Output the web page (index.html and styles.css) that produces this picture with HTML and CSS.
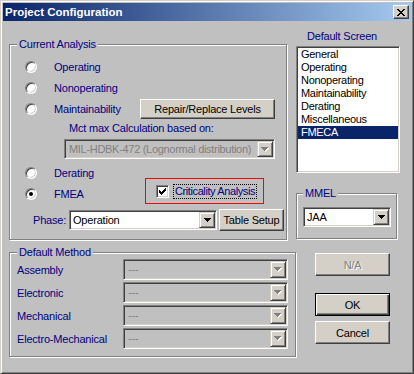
FILE: index.html
```html
<!DOCTYPE html>
<html lang="en">
<head>
    <meta charset="UTF-8">
    <title>Project Configuration</title>
    <link rel="stylesheet" href="styles.css">
</head>
<body>
    <div class="window">
        <div class="titlebar">
            <span class="title">Project Configuration</span>
            <span class="close-btn">
                <svg width="8" height="7" viewBox="0 0 8 7" shape-rendering="crispEdges"><path d="M0 0h2v1H0zM6 0h2v1H6zM1 1h2v1H1zM5 1h2v1H5zM2 2h4v1H2zM3 3h2v1H3zM2 4h4v1H2zM1 5h2v1H1zM5 5h2v1H5zM0 6h2v1H0zM6 6h2v1H6z" fill="#000"/></svg>
            </span>
        </div>

        <div class="client">
            <div class="left-col">
                <fieldset class="group analysis">
                    <legend>Current Analysis</legend>
                    <div class="row">
                        <div class="option"><span class="radio"></span><span class="opt-label">Operating</span></div>
                    </div>
                    <div class="row">
                        <div class="option"><span class="radio"></span><span class="opt-label">Nonoperating</span></div>
                    </div>
                    <div class="row">
                        <div class="option"><span class="radio"></span><span class="opt-label">Maintainability</span></div>
                        <div class="btn repair-btn">Repair/Replace Levels</div>
                    </div>
                    <div class="mct-label">Mct max Calculation based on:</div>
                    <div class="combo disabled mil-combo">
                        <span class="combo-text">MIL-HDBK-472 (Lognormal distribution)</span>
                        <span class="combo-btn">
                            <svg width="8" height="5" viewBox="0 0 8 5" shape-rendering="crispEdges"><path d="M1 1h7v1H1zM2 2h5v1H2zM3 3h3v1H3zM4 4h1v1H4z" fill="#fff"/><path d="M0 0h7v1H0zM1 1h5v1H1zM2 2h3v1H2zM3 3h1v1H3z" fill="#808080"/></svg>
                        </span>
                    </div>
                    <div class="row derating">
                        <div class="option"><span class="radio"></span><span class="opt-label">Derating</span></div>
                    </div>
                    <div class="row">
                        <div class="option"><span class="radio checked"></span><span class="opt-label">FMEA</span></div>
                        <div class="crit-box">
                            <span class="check">
                                <svg width="7" height="7" viewBox="0 0 7 7" shape-rendering="crispEdges"><path d="M6 0h1v1H6zM5 1h2v1H5zM0 2h1v1H0zM4 2h3v1H4zM0 3h2v1H0zM3 3h3v1H3zM0 4h5v1H0zM1 5h3v1H1zM2 6h1v1H2z" fill="#000"/></svg>
                            </span>
                            <span class="focus-label">Criticality Analysis</span>
                        </div>
                    </div>
                    <div class="row phase-row">
                        <span class="phase-label">Phase:</span>
                        <div class="combo phase-combo">
                            <span class="combo-text">Operation</span>
                            <span class="combo-btn">
                                <svg width="7" height="4" viewBox="0 0 7 4" shape-rendering="crispEdges"><path d="M0 0h7v1H0zM1 1h5v1H1zM2 2h3v1H2zM3 3h1v1H3z" fill="#000"/></svg>
                            </span>
                        </div>
                        <div class="btn table-btn">Table Setup</div>
                    </div>
                </fieldset>

                <fieldset class="group method">
                    <legend>Default Method</legend>
                    <div class="method-row">
                        <span class="method-label">Assembly</span>
                        <div class="combo disabled method-combo">
                            <span class="combo-text">---</span>
                            <span class="combo-btn">
                                <svg width="8" height="5" viewBox="0 0 8 5" shape-rendering="crispEdges"><path d="M1 1h7v1H1zM2 2h5v1H2zM3 3h3v1H3zM4 4h1v1H4z" fill="#fff"/><path d="M0 0h7v1H0zM1 1h5v1H1zM2 2h3v1H2zM3 3h1v1H3z" fill="#808080"/></svg>
                            </span>
                        </div>
                    </div>
                    <div class="method-row">
                        <span class="method-label">Electronic</span>
                        <div class="combo disabled method-combo">
                            <span class="combo-text">---</span>
                            <span class="combo-btn">
                                <svg width="8" height="5" viewBox="0 0 8 5" shape-rendering="crispEdges"><path d="M1 1h7v1H1zM2 2h5v1H2zM3 3h3v1H3zM4 4h1v1H4z" fill="#fff"/><path d="M0 0h7v1H0zM1 1h5v1H1zM2 2h3v1H2zM3 3h1v1H3z" fill="#808080"/></svg>
                            </span>
                        </div>
                    </div>
                    <div class="method-row">
                        <span class="method-label">Mechanical</span>
                        <div class="combo disabled method-combo">
                            <span class="combo-text">---</span>
                            <span class="combo-btn">
                                <svg width="8" height="5" viewBox="0 0 8 5" shape-rendering="crispEdges"><path d="M1 1h7v1H1zM2 2h5v1H2zM3 3h3v1H3zM4 4h1v1H4z" fill="#fff"/><path d="M0 0h7v1H0zM1 1h5v1H1zM2 2h3v1H2zM3 3h1v1H3z" fill="#808080"/></svg>
                            </span>
                        </div>
                    </div>
                    <div class="method-row">
                        <span class="method-label">Electro-Mechanical</span>
                        <div class="combo disabled method-combo">
                            <span class="combo-text">---</span>
                            <span class="combo-btn">
                                <svg width="8" height="5" viewBox="0 0 8 5" shape-rendering="crispEdges"><path d="M1 1h7v1H1zM2 2h5v1H2zM3 3h3v1H3zM4 4h1v1H4z" fill="#fff"/><path d="M0 0h7v1H0zM1 1h5v1H1zM2 2h3v1H2zM3 3h1v1H3z" fill="#808080"/></svg>
                            </span>
                        </div>
                    </div>
                </fieldset>
            </div>

            <div class="right-col">
                <div class="list-caption">Default Screen</div>
                <div class="listbox">
                    <div class="list-item">General</div>
                    <div class="list-item">Operating</div>
                    <div class="list-item">Nonoperating</div>
                    <div class="list-item">Maintainability</div>
                    <div class="list-item">Derating</div>
                    <div class="list-item">Miscellaneous</div>
                    <div class="list-item selected">FMECA</div>
                </div>

                <fieldset class="group mmel">
                    <legend>MMEL</legend>
                    <div class="combo mmel-combo">
                        <span class="combo-text">JAA</span>
                        <span class="combo-btn">
                            <svg width="7" height="4" viewBox="0 0 7 4" shape-rendering="crispEdges"><path d="M0 0h7v1H0zM1 1h5v1H1zM2 2h3v1H2zM3 3h1v1H3z" fill="#000"/></svg>
                        </span>
                    </div>
                </fieldset>

                <div class="btn dlg-btn na-btn">N/A</div>
                <div class="btn dlg-btn ok-btn">OK</div>
                <div class="btn dlg-btn cancel-btn">Cancel</div>
            </div>
        </div>
    </div>
</body>
</html>
```

FILE: styles.css
```css
body {
    margin: 0;
    font-family: "Liberation Sans", Arial, sans-serif;
    font-size: 11px;
    letter-spacing: -0.2px;
    color: #000;
}

.window {
    width: 414px;
    height: 374px;
    box-sizing: border-box;
    background: #c0c0c0;
    border: 1px solid;
    border-color: #d4d0c8 #404040 #404040 #d4d0c8;
    box-shadow: inset 1px 1px #fff, inset -1px -1px #808080;
    padding: 2px;
    display: flex;
    flex-direction: column;
}

.titlebar {
    height: 18px;
    flex: none;
    display: flex;
    align-items: center;
    padding: 0 2px;
    background: linear-gradient(to right, #0a246a, #a6caf0);
    color: #fff;
    font-weight: bold;
    font-size: 11.5px;
    letter-spacing: 0;
}

.title {
    flex: 1;
}

.close-btn {
    width: 16px;
    height: 14px;
    box-sizing: border-box;
    background: #d4d0c8;
    border: 1px solid;
    border-color: #fff #404040 #404040 #fff;
    box-shadow: inset -1px -1px #808080;
    display: flex;
    align-items: center;
    justify-content: center;
}

.client {
    flex: 1;
    display: flex;
    padding-left: 6px;
}

.left-col {
    width: 287px;
    padding-top: 17px;
    display: flex;
    flex-direction: column;
}

.right-col {
    width: 104px;
    display: flex;
    flex-direction: column;
}

/* group boxes */
.group {
    margin: 0;
    padding: 0 0 0 7px;
    min-width: 0;
    box-sizing: border-box;
    border: 1px solid #808080;
    box-shadow: inset 1px 1px #fff, 1px 1px #fff;
}

.group legend {
    padding: 0 2px;
    line-height: 13px;
    color: #000080;
    background: #c0c0c0;
}

.analysis {
    width: 278px;
    padding-top: 5px;
    padding-bottom: 8px;
}

.row {
    display: flex;
    align-items: center;
    height: 21px;
}

.option {
    display: flex;
    align-items: center;
    width: 115px;
    margin-left: 8px;
    flex: none;
}

.radio {
    width: 12px;
    height: 12px;
    box-sizing: border-box;
    flex: none;
    border-radius: 50%;
    background: #fff;
    border: 1px solid;
    border-color: #808080 #fff #fff #808080;
    box-shadow: inset 1px 1px #404040, inset -1px -1px #d4d0c8;
    margin-right: 17px;
    display: flex;
    align-items: center;
    justify-content: center;
}

.radio.checked::after {
    content: "";
    width: 4px;
    height: 4px;
    border-radius: 50%;
    background: #000;
}

.opt-label {
    color: #000080;
    white-space: nowrap;
}

.btn {
    box-sizing: border-box;
    background: #d4d0c8;
    border: 1px solid;
    border-color: #fff #404040 #404040 #fff;
    box-shadow: inset -1px -1px #808080;
    display: flex;
    align-items: center;
    justify-content: center;
    color: #000;
    white-space: nowrap;
}

.repair-btn {
    width: 135px;
    height: 20px;
}

.mct-label {
    height: 18px;
    line-height: 18px;
    padding-left: 52px;
    color: #000080;
}

/* combo boxes */
.combo {
    display: flex;
    box-sizing: border-box;
    height: 20px;
    padding: 1px;
    background: #fff;
    border: 1px solid;
    border-color: #808080 #fff #fff #808080;
    box-shadow: inset 1px 1px #404040, inset -1px -1px #d4d0c8;
}

.combo-text {
    flex: 1;
    padding-left: 2px;
    line-height: 16px;
    white-space: nowrap;
    overflow: hidden;
}

.combo-btn {
    width: 16px;
    flex: none;
    box-sizing: border-box;
    background: #d4d0c8;
    border: 1px solid;
    border-color: #d4d0c8 #404040 #404040 #d4d0c8;
    box-shadow: inset 1px 1px #fff, inset -1px -1px #808080;
    display: flex;
    align-items: center;
    justify-content: center;
}

.combo.disabled {
    background: #c0c0c0;
    color: #808080;
}

.mil-combo {
    width: 211px;
    margin: 2px 0 0 47px;
}

.mil-combo .combo-text {
    padding-left: 3px;
    letter-spacing: -0.3px;
}

.derating {
    margin-top: 3px;
}

.crit-box {
    width: 119px;
    height: 26px;
    margin: -5px 0 0 5px;
    box-sizing: border-box;
    border: 1px solid #ff0000;
    padding-left: 10px;
    display: flex;
    align-items: center;
}

.check {
    width: 13px;
    height: 13px;
    box-sizing: border-box;
    flex: none;
    background: #fff;
    border: 1px solid;
    border-color: #808080 #fff #fff #808080;
    box-shadow: inset 1px 1px #404040, inset -1px -1px #d4d0c8;
    display: flex;
    align-items: center;
    justify-content: center;
}

.focus-label {
    margin-left: 4px;
    padding: 0 1px;
    line-height: 13px;
    border: 1px dotted #000;
    color: #000080;
    white-space: nowrap;
    letter-spacing: -0.4px;
}

.phase-row {
    height: 22px;
    margin-top: 5px;
}

.phase-label {
    margin-left: 16px;
    width: 36px;
    color: #000080;
}

.phase-combo {
    width: 148px;
}

.table-btn {
    width: 65px;
    height: 22px;
    margin-left: 2px;
}

.method {
    width: 287px;
    margin-top: 6px;
    padding-bottom: 7px;
}

.method-row {
    display: flex;
    align-items: center;
    height: 21px;
}

.method-row + .method-row {
    margin-top: 2px;
}

.method-label {
    width: 106px;
    color: #000080;
    white-space: nowrap;
}

.method-combo {
    width: 165px;
    height: 21px;
}

.method-combo .combo-text {
    padding-left: 3px;
}

/* right column */
.list-caption {
    margin-top: 9px;
    padding-left: 11px;
    line-height: 13px;
    color: #000080;
}

.listbox {
    margin-top: 3px;
    height: 127px;
    box-sizing: border-box;
    padding: 1px;
    background: #fff;
    border: 1px solid;
    border-color: #808080 #fff #fff #808080;
    box-shadow: inset 1px 1px #404040, inset -1px -1px #d4d0c8;
}

.list-item {
    height: 13px;
    line-height: 13px;
    padding-left: 3px;
    letter-spacing: -0.3px;
}

.list-item.selected {
    background: #0a246a;
    color: #fff;
}

.mmel {
    width: 101px;
    margin-top: 14px;
    padding: 7px 0 11px 6px;
}

.mmel-combo {
    width: 88px;
}

.dlg-btn {
    width: 75px;
    height: 23px;
    margin-left: 19px;
}

.na-btn {
    margin-top: 14px;
    color: #808080;
    text-shadow: 1px 1px #fff;
}

.ok-btn {
    margin-top: 17px;
    border-color: #000;
    box-shadow: inset 1px 1px #fff, inset -1px -1px #404040, inset -2px -2px #808080;
}

.cancel-btn {
    margin-top: 5px;
}
```
